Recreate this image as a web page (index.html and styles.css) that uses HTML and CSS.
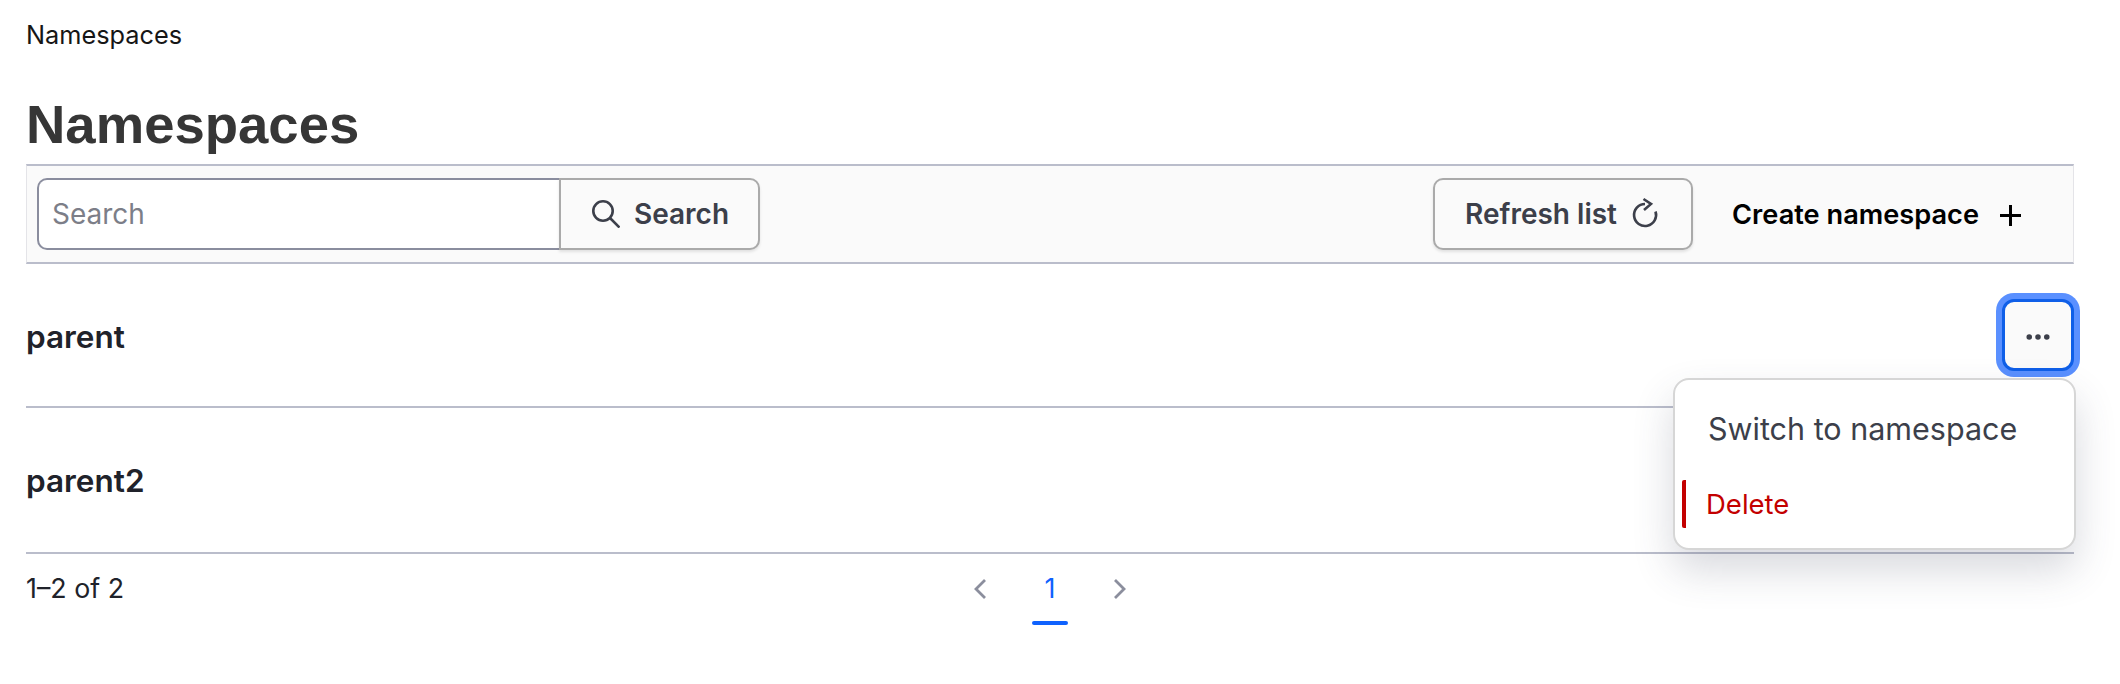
FILE: index.html
```html
<!DOCTYPE html>
<html lang="en">
<head>
  <meta charset="UTF-8" />
  <title>Namespaces</title>
  <link rel="stylesheet" href="styles.css">
</head>
<body>
  <nav class="breadcrumb">Namespaces</nav>
  <h1>Namespaces</h1>

  <div class="toolbar">
    <div class="search">
      <input class="search-input" type="text" placeholder="Search">
      <button class="search-btn">
        <svg class="icon" viewBox="0 0 28 28" fill="none" stroke="currentColor" stroke-width="2.6"><circle cx="11" cy="11" r="9.700"/><path d="M18 18l9.500 9.500"/></svg>
        Search
      </button>
    </div>
    <button class="refresh-btn">
      Refresh list
      <svg class="icon-refresh" viewBox="0 0 28 32" fill="none" stroke="currentColor" stroke-width="2.6"><path d="M14 7a11 11 0 1 0 10.500 7.500"/><path d="M12.500 2l7.500 5-7 6"/></svg>
    </button>
    <button class="create-btn">
      Create namespace
      <svg class="icon-plus" viewBox="0 0 21 21" fill="none" stroke="currentColor" stroke-width="3"><path d="M10.500 0v21M0 10.500h21"/></svg>
    </button>
  </div>

  <div class="row">
    <span class="row-name">parent</span>
    <button class="more-btn" aria-label="More">
      <svg class="dots" viewBox="0 0 26 6" width="24" height="6" fill="currentColor"><circle cx="3.500" cy="3" r="3"/><circle cx="13" cy="3" r="3"/><circle cx="22.500" cy="3" r="3"/></svg>
    </button>
  </div>
  <div class="row">
    <span class="row-name">parent2</span>
  </div>

  <footer class="pager">
    <span class="pager-count">1–2 of 2</span>
    <div class="pages">
      <svg class="chevron" viewBox="0 0 14 22" fill="none" stroke="currentColor" stroke-width="2.800"><path d="M12 2L3 11l9 9"/></svg>
      <span class="page-current">1</span>
      <svg class="chevron" viewBox="0 0 14 22" fill="none" stroke="currentColor" stroke-width="2.800"><path d="M2 2l9 9-9 9"/></svg>
    </div>
  </footer>

  <div class="menu">
    <div class="menu-item">Switch to namespace</div>
    <div class="menu-item danger">Delete</div>
  </div>
</body>
</html>
```

FILE: styles.css
```css
* {
  box-sizing: border-box;
}
body {
  margin: 0;
  padding: 0 46px 0 26px;
  position: relative;
  height: 684px;
  overflow: hidden;
  font-family: Inter, 'Liberation Sans', sans-serif;
  background: #fff;
  color: #161616;
}
button {
  font-family: inherit;
  cursor: pointer;
}
.breadcrumb {
  padding-top: 19px;
  height: 70px;
  font-size: 25.300px;
  line-height: 32px;
}
h1 {
  margin: 0;
  height: 94px;
  padding-top: 25px;
  font-family: 'Liberation Sans', Arial, sans-serif;
  font-size: 54.500px;
  line-height: 60px;
  font-weight: 700;
  color: #363636;
}
.toolbar {
  display: flex;
  align-items: center;
  height: 100px;
  padding: 0 10px;
  background: #fafafa;
  border-top: 2px solid #babdcb;
  border-bottom: 2px solid #babdcb;
  border-right: 1px solid #e4e4e8;
  border-left: 1px solid #e4e4e8;
}
.icon {
  width: 28px;
  height: 28px;
  flex: none;
}
.icon-refresh {
  width: 28px;
  height: 32px;
  flex: none;
  margin-top: -2px;
}
.icon-plus {
  width: 21px;
  height: 21px;
  flex: none;
  margin-top: 2px;
}
.search {
  display: flex;
  height: 72px;
  margin-right: auto;
}
.search-input {
  width: 522px;
  height: 72px;
  padding: 0 13px;
  font-family: inherit;
  font-size: 28px;
  background: #fff;
  border: 2px solid #8a8d9e;
  border-right: none;
  border-radius: 10px 0 0 10px;
  outline: none;
}
.search-input::placeholder {
  color: #7c7e88;
}
.search-btn, .refresh-btn {
  display: flex;
  align-items: center;
  height: 72px;
  font-size: 28px;
  font-weight: 600;
  color: #3c3f4a;
  background: #fafafa;
  border: 2px solid #aaa;
  box-shadow: 0 2px 3px rgba(0, 0, 0, 0.1);
}
.search-btn {
  width: 201px;
  gap: 14px;
  padding: 0 0 0 31px;
  border-radius: 0 10px 10px 0;
}
.refresh-btn {
  width: 260px;
  gap: 14px;
  padding: 0 0 0 30px;
  border-radius: 10px;
}
.create-btn {
  display: flex;
  align-items: center;
  gap: 21px;
  margin: 0 42px 0 39px;
  padding: 0;
  font-size: 27.200px;
  font-weight: 600;
  color: #000;
  background: none;
  border: none;
}
.row {
  display: flex;
  align-items: center;
  justify-content: space-between;
  height: 144px;
  border-bottom: 2px solid #babdcb;
}
.row + .row {
  height: 146px;
}
.row-name {
  padding-top: 2px;
  font-size: 31.500px;
  font-weight: 600;
  color: #20222a;
}
.row + .row .row-name {
  padding-top: 0;
}
.more-btn {
  display: flex;
  align-items: center;
  justify-content: center;
  width: 72px;
  height: 72px;
  padding: 0;
  color: #3c3f4a;
  background: #fafafa;
  border: 3px solid #0f5fe8;
  border-radius: 12px;
  box-shadow: 0 0 0 6px #5a90ff;
}
.dots {
  margin-top: 3px;
}
.pager {
  display: grid;
  grid-template-columns: 1fr auto 1fr;
  height: 70px;
  align-items: center;
}
.pager-count {
  grid-column: 1;
  padding-bottom: 2px;
  font-size: 26.800px;
  color: #20222a;
}
.pages {
  grid-column: 2;
  display: flex;
  align-items: center;
  gap: 45px;
  color: #8b8e9d;
}
.chevron {
  width: 14px;
  height: 22px;
}
.page-current {
  width: 36px;
  position: relative;
  text-align: center;
  font-size: 27px;
  line-height: 32px;
  color: #0f62fe;
}
.page-current::after {
  content: "";
  position: absolute;
  left: 0;
  right: 0;
  top: 48px;
  height: 4px;
  border-radius: 2px;
  background: #0f62fe;
}
.menu {
  position: absolute;
  top: 378px;
  left: 1673px;
  width: 403px;
  height: 172px;
  padding: 12px 7px 0;
  background: #fff;
  border: 2px solid #d6d6d6;
  border-radius: 16px;
  box-shadow: 0 20px 40px rgba(60, 65, 90, 0.2);
}
.menu-item {
  display: flex;
  align-items: center;
  height: 73px;
  padding-left: 26px;
  font-size: 30.500px;
  color: #3c3f4a;
}
.menu-item.danger {
  margin-top: 15px;
  height: 48px;
  padding-left: 20px;
  font-size: 27.500px;
  font-weight: 400;
  color: #c30000;
  border-left: 4px solid #c30000;
  border-radius: 2px;
}
```
